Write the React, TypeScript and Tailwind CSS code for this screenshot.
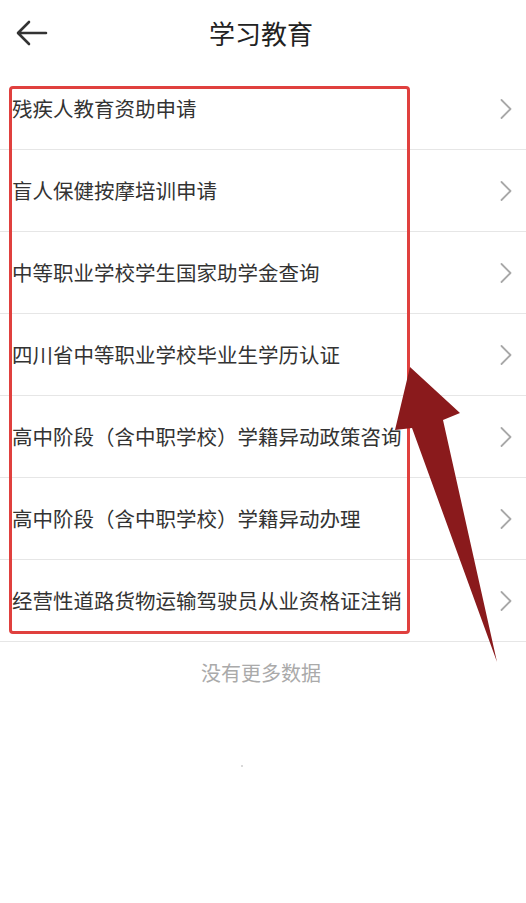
import React from "react";

const items = [
  "残疾人教育资助申请",
  "盲人保健按摩培训申请",
  "中等职业学校学生国家助学金查询",
  "四川省中等职业学校毕业生学历认证",
  "高中阶段（含中职学校）学籍异动政策咨询",
  "高中阶段（含中职学校）学籍异动办理",
  "经营性道路货物运输驾驶员从业资格证注销",
];

export default function App() {
  return (
    <div
      className="relative w-[526px] h-[903px] bg-white overflow-hidden"
      style={{ fontFamily: '"Noto Sans CJK SC", "Noto Sans", sans-serif' }}
    >
      {/* header */}
      <div className="grid grid-cols-[60px_1fr_60px] items-center h-[68px] pb-[2px]">
        <button className="flex items-center pl-[16px]">
          <svg width="32" height="26" viewBox="0 0 32 26" fill="none" stroke="#333" strokeWidth="2.6" strokeLinecap="round" strokeLinejoin="round">
            <path d="M30 13H3M13 2L2 13l11 11" />
          </svg>
        </button>
        <h1 className="text-center text-[26px] text-[#222] leading-none pr-[4px]">学习教育</h1>
        <div />
      </div>

      {/* list */}
      <ul>
        {items.map((t) => (
          <li
            key={t}
            className="flex items-center justify-between h-[82px] border-b border-[#e6e6e6] pl-[12px] pr-[14px]"
          >
            <span className="text-[20.5px] text-[#333] whitespace-nowrap">{t}</span>
            <svg width="12" height="22" viewBox="0 0 12 22" fill="none" stroke="#a8a8a8" strokeWidth="1.8" strokeLinecap="round" strokeLinejoin="round">
              <path d="M1.5 2l9 9-9 9" />
            </svg>
          </li>
        ))}
      </ul>

      <div className="text-center text-[20px] text-[#aaa] pt-[16px] pr-[4px]">没有更多数据</div>
      <div className="flex justify-center pt-[77px] pr-[42px]">
        <div className="w-[2px] h-[2px] rounded-full bg-[#ccc]" />
      </div>

      {/* annotation box */}
      <div className="absolute left-[9px] top-[86px] w-[401px] h-[548px] border-[3px] border-[#e0403e] rounded-[4px] pointer-events-none" />

      {/* annotation arrow */}
      <svg className="absolute left-0 top-0 pointer-events-none" width="526" height="903" viewBox="0 0 526 903">
        <path d="M410 367L460 413L443 420L497 662L412 428L395 430Z" fill="#8a1a1c" />
      </svg>
    </div>
  );
}
